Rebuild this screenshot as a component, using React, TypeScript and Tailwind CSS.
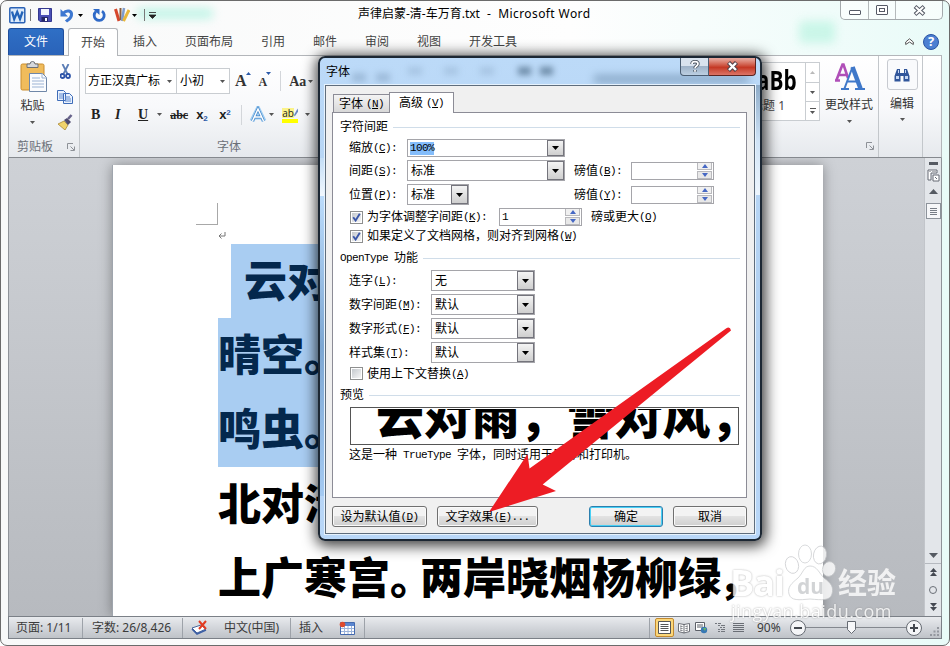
import type { ReactNode } from "react";
import clsx from "clsx";

const ribbonTabs = ["插入", "页面布局", "引用", "邮件", "审阅", "视图", "开发工具"];

// Latin runs are set half as wide as the Chinese glyphs
function Sim({ children }: { children: string }) {
  const parts = children.split(/([ -~]+)/).filter(Boolean);
  return (
    <span className="flex h-[12px] items-center text-[12px] leading-[12px] whitespace-pre">
      {parts.map((p, i) =>
        /^[ -~]/.test(p) ? (
          <span key={i} className="font-['Liberation_Mono','Noto_Sans_CJK_SC',monospace] text-[11px] tracking-[-0.6px]">{p}</span>
        ) : (
          <span key={i}>{p}</span>
        )
      )}
    </span>
  );
}

function Label({ text, k, colon }: { text: string; k: string; colon?: boolean }) {
  return (
    <span className="flex h-[12px] items-center text-[12px] leading-[12px] whitespace-pre">
      {text}
      <span className="font-['Liberation_Mono',monospace] text-[11px] tracking-[-0.6px]">
        (<span className="underline underline-offset-1">{k}</span>){colon ? ":" : ""}
      </span>
    </span>
  );
}

function Caret({ className = "", fill = "#555" }: { className?: string; fill?: string }) {
  return (
    <svg width="5" height="3" viewBox="0 0 5 3" className={clsx("shrink-0", className)}>
      <path d="M0 0h5L2.5 3z" fill={fill} />
    </svg>
  );
}

function Combo({ value, className, selected }: { value: string; className: string; selected?: boolean }) {
  return (
    <div className={clsx("flex border border-[#a5a5aa] bg-white", className)}>
      <div className="flex flex-1 items-center pl-[3px]">
        <span className={clsx("flex h-[13px] items-center", selected ? "-ml-px bg-[#84bdfb]" : "")}>
          <Sim>{value}</Sim>
        </span>
      </div>
      <div className="flex w-[17px] items-center justify-center border border-[#74747c] bg-linear-to-b from-[#f4f4f4] to-[#cfcfcf]">
        <svg width="7" height="4" viewBox="0 0 7 4"><path d="M0 0h7L3.5 4z" fill="#000" /></svg>
      </div>
    </div>
  );
}

function Spinner({ value = "" }: { value?: string }) {
  return (
    <div className="flex h-[18px] w-[83px] border border-[#a5a5aa] bg-white">
      <div className="flex flex-1 items-center pl-[2px]"><Sim>{value}</Sim></div>
      <div className="mr-px flex w-[15px] flex-col gap-px">
        <div className="flex flex-1 items-center justify-center border border-t-0 border-[#b9b9bd] bg-[#f0f0f0]">
          <svg width="6" height="4" viewBox="0 0 6 4"><path d="M0 4h6L3 0z" fill="#4668c4" /></svg>
        </div>
        <div className="flex flex-1 items-center justify-center border border-[#b9b9bd] bg-[#e8e8e8]">
          <svg width="6" height="4" viewBox="0 0 6 4"><path d="M0 0h6L3 4z" fill="#4668c4" /></svg>
        </div>
      </div>
    </div>
  );
}

function Check({ on }: { on?: boolean }) {
  return (
    <div className="mr-[4px] ml-px size-[13px] border border-[#8e8f8f] bg-white p-px">
      <div className="size-full bg-linear-to-br from-[#c4c8cd] to-[#f6f6f6]">
        {on && (
          <svg width="9" height="9" viewBox="0 0 9 9"><path d="M1.2 4.2 3.6 7.5 7.8 .8" fill="none" stroke="#3a56a8" strokeWidth="1.9" /></svg>
        )}
      </div>
    </div>
  );
}

function GroupTitle({ children, className }: { children: string; className: string }) {
  return (
    <div className={clsx("flex items-center pr-[6px] pl-[7px]", className)}>
      <Sim>{children}</Sim>
      <div className="ml-[5px] h-px flex-1 bg-[#d0dde9]" />
    </div>
  );
}

function DialogButton({ children, className, primary }: { children: ReactNode; className: string; primary?: boolean }) {
  return (
    <div
      className={clsx(
        "flex h-[21px] items-center justify-center rounded-[3px] border bg-linear-to-b from-[#f3f3f3] from-50% via-[#e2e2e2] via-50% to-[#cfcfcf]",
        primary ? "border-[#2c7fae] shadow-[inset_0_0_0_1px_#48d0f5]" : "border-[#707070] shadow-[inset_0_0_0_1px_#fafafa]",
        className
      )}
    >
      {children}
    </div>
  );
}

function FontDialog() {
  const features = [
    { text: "连字", k: "L", value: "无" },
    { text: "数字间距", k: "M", value: "默认" },
    { text: "数字形式", k: "F", value: "默认" },
    { text: "样式集", k: "T", value: "默认" },
  ];
  return (
    <div className="absolute top-[55px] left-[317px] flex h-[485px] w-[444px] flex-col rounded-[7px] border-2 border-[#1c2733] bg-linear-to-b from-[#bcdaf8] from-0% via-[#b0cff0] via-60% to-[#b9d7f8] px-[5px] pb-[5px] text-black shadow-[1px_2px_14px_3px_rgba(0,0,0,0.75)]">
      <div className="absolute top-[100px] left-0 h-[38px] w-[5px] bg-linear-to-b from-[#c4def6] to-[#f2f8fe]" />
      <div className="absolute top-[138px] left-0 h-[300px] w-[5px] bg-linear-to-b from-[#bcdcfb] via-[#7da7d3] to-[#a4caf2]" />
      <div className="absolute top-[27px] right-0 h-[110px] w-[5px] bg-linear-to-b from-[#8dabc8] via-[#cfe3f6] to-[#eef6fd]" />
      <div className="absolute top-[9px] left-[32px] flex gap-[14px] blur-[3px]">
        <div className="mt-[6px] h-[9px] w-[14px] bg-[#8aa9c8] opacity-60" />
        <div className="-ml-[4px] mt-[6px] h-[9px] w-[14px] bg-[#8aa9c8] opacity-60" />
        <div className="ml-[4px] h-[8px] w-[14px] bg-[#93b1cf] opacity-50" />
        <div className="ml-[8px] h-[8px] w-[14px] bg-[#93b1cf] opacity-50" />
        <div className="ml-[8px] h-[8px] w-[14px] bg-[#93b1cf] opacity-50" />
        <div className="ml-[10px] h-[8px] w-[13px] bg-[#587591] opacity-80" />
        <div className="-ml-[5px] h-[8px] w-[13px] bg-[#587591] opacity-80" />
      </div>
      <div className="absolute top-[17px] left-[274px] h-[8px] w-[155px] bg-[#6787a7] opacity-60 blur-[4px]" />
      <div className="relative flex h-[27px] shrink-0 justify-between">
        <span className="pt-[5px] pl-px text-[12px]">字体</span>
        <div className="-mr-[1px] flex h-[18px]">
          <div className="flex w-[29px] items-center justify-center rounded-bl-[4px] border border-t-0 border-[#4a5d72] bg-linear-to-b from-[#d9e3ee] from-45% via-[#9fb3c8] via-50% to-[#bccfe2]">
            <svg width="10" height="13" viewBox="0 0 10 13">
              <path d="M2 4C2 .9 8 .9 8 4c0 2-3 2-3 4.3M5 10v1.8" fill="none" stroke="#48525e" strokeWidth="3.4" />
              <path d="M2 4C2 .9 8 .9 8 4c0 2-3 2-3 4.3M5 10v1.8" fill="none" stroke="#fff" strokeWidth="1.7" />
            </svg>
          </div>
          <div className="flex w-[47px] items-center justify-center rounded-br-[4px] border border-t-0 border-l-0 border-[#5c2420] bg-linear-to-b from-[#e5a59b] from-5% via-[#c43723] via-55% to-[#dc7466]">
            <svg width="13" height="11" viewBox="0 0 13 11">
              <path d="m2.5 1.5 8 8m0-8-8 8" stroke="#54424a" strokeWidth="4.4" />
              <path d="m3 2 7 7m0-7-7 7" stroke="#fff" strokeWidth="2.4" />
            </svg>
          </div>
        </div>
      </div>

      <div className="relative flex flex-1 flex-col border border-[#5f6d7c] bg-[#f0f0f0] pt-[6px] shadow-[0_0_0_1px_#e6f2fd]">
        <div className="relative z-10 ml-[7px] flex h-[20px] items-end">
          <div className="flex h-[18px] w-[57px] items-center justify-center border border-b-0 border-[#8c8c96] bg-linear-to-b from-[#f4f4f4] to-[#d8d8d8]">
            <Label text="字体 " k="N" />
          </div>
          <div className="-mb-px -ml-px flex h-[21px] w-[65px] items-center justify-center border border-b-0 border-[#8c8c96] bg-white">
            <Label text="高级 " k="V" />
          </div>
        </div>
        <div className="ml-[6px] flex h-[386px] w-[415px] flex-col border border-[#8c8c96] bg-white pt-[2px]">
          <GroupTitle className="h-[24px]">字符间距</GroupTitle>
          <div className="flex h-[18px] items-center pl-[16px]">
            <div className="w-[58px]"><Label text="缩放" k="C" colon /></div>
            <Combo value="100%" selected className="h-[18px] w-[158px]" />
          </div>
          <div className="flex h-[27px] items-center pl-[16px]">
            <div className="w-[58px]"><Label text="间距" k="S" colon /></div>
            <Combo value="标准" className="h-[21px] w-[158px]" />
            <div className="ml-[9px] w-[57px]"><Label text="磅值" k="B" colon /></div>
            <Spinner />
          </div>
          <div className="flex h-[21px] items-center pl-[16px]">
            <div className="w-[58px]"><Label text="位置" k="P" colon /></div>
            <Combo value="标准" className="h-[21px] w-[62px]" />
            <div className="ml-[105px] w-[57px]"><Label text="磅值" k="Y" colon /></div>
            <Spinner />
          </div>
          <div className="mt-[3px] flex h-[18px] items-center pl-[16px]">
            <Check on />
            <div className="w-[132px]"><Label text="为字体调整字间距" k="K" colon /></div>
            <Spinner value="1" />
            <div className="ml-[9px]"><Label text="磅或更大" k="O" /></div>
          </div>
          <div className="flex h-[20px] items-center pl-[16px]">
            <Check on />
            <Label text="如果定义了文档网格，则对齐到网格" k="W" />
          </div>
          <GroupTitle className="h-[24px]">OpenType 功能</GroupTitle>
          <div className="flex flex-col gap-[3px]">
            {features.map((f) => (
              <div key={f.text} className="flex h-[21px] items-center pl-[16px]">
                <div className="w-[82px]"><Label text={f.text} k={f.k} colon /></div>
                <Combo value={f.value} className="h-[21px] w-[104px]" />
              </div>
            ))}
          </div>
          <div className="flex h-[21px] items-center pl-[16px]">
            <Check />
            <Label text="使用上下文替换" k="A" />
          </div>
          <GroupTitle className="h-[22px]">预览</GroupTitle>
          <div className="mt-px ml-[17px] h-[38px] w-[389px] border border-[#555] py-px">
            <div className="h-full overflow-hidden pl-[25px]">
              <div className="-mt-[17px] text-[48px] leading-[48px] font-black tracking-[-0.3px] whitespace-nowrap">云对雨，雪对风，</div>
            </div>
          </div>
          <div className="mt-px flex h-[17px] items-center pl-[16px]">
            <Sim>这是一种 TrueType 字体，同时适用于屏幕和打印机。</Sim>
          </div>
        </div>
        <div className="mt-[8px] ml-[6px] flex">
          <DialogButton className="w-[95px]"><Label text="设为默认值" k="D" /></DialogButton>
          <DialogButton className="ml-[10px] w-[101px]">
            <Label text="文字效果" k="E" /><Sim>...</Sim>
          </DialogButton>
          <DialogButton primary className="ml-[51px] w-[74px]"><Sim>确定</Sim></DialogButton>
          <DialogButton className="ml-[10px] w-[74px]"><Sim>取消</Sim></DialogButton>
        </div>
      </div>
    </div>
  );
}

function TitleBar() {
  return (
    <div className="relative flex h-[28px] shrink-0 items-center">
      <div className="absolute top-[7px] left-[136px] h-[11px] w-[76px] rounded bg-[#8ff0d6] opacity-50 blur-[5px]" />
      <div className="absolute top-[20px] left-[798px] h-[22px] w-[36px] rounded bg-[#9df0d4] opacity-45 blur-[5px]" />
      <div className="relative flex items-center pl-[8px]">
        <svg width="17" height="17" viewBox="0 0 17 17">
          <rect x=".8" y=".8" width="15" height="15" rx="1" fill="#dceafa" stroke="#2b62b5" strokeWidth="1.5" />
          <path d="M3 4.500 5.200 12 8.200 5l2.800 7 2.600-7.500" fill="none" stroke="#2363b8" strokeWidth="2.300" />
        </svg>
        <div className="ml-[4px] h-[12px] w-px bg-[#777]" />
        <svg width="14" height="14" viewBox="0 0 14 14" className="ml-[7px]">
          <path d="M.5.500h13v13H2L.5 12z" fill="#4a4fb5" stroke="#34388f" />
          <path d="M3 1h8v6H3z" fill="#f3f6fd" />
          <path d="M3.500 9h6.500v4.500H3.500z" fill="#242766" />
          <path d="M7 10h2v3H7z" fill="#fff" />
        </svg>
        <svg width="14" height="15" viewBox="0 0 14 15" className="ml-[8px]">
          <path d="M3 5.500C7 1 12 3 11.500 7S8 11.500 6 13.500" fill="none" stroke="#3d77d0" strokeWidth="3" />
          <path d="M.5 1v7.500H8z" fill="#3d77d0" />
        </svg>
        <Caret className="ml-[4px]" fill="#000" />
        <svg width="14" height="14" viewBox="0 0 14 14" className="ml-[9px]">
          <path d="M10 3.200A5 5 0 1 1 4 3.500" fill="none" stroke="#2f6ac8" strokeWidth="2.800" />
          <path d="M1 1h6.500v6z" fill="#2f6ac8" />
        </svg>
        <svg width="16" height="16" viewBox="0 0 16 16" className="ml-[8px]">
          <path d="m1.500 2 3.500 12" stroke="#d5472c" strokeWidth="3" />
          <path d="M6.500 1v12" stroke="#8a5e3c" strokeWidth="2" />
          <path d="M10 1 8 14" stroke="#7f9ccb" strokeWidth="2.500" />
          <path d="M15 3 9.500 14" stroke="#e9b73a" strokeWidth="3" />
        </svg>
        <Caret className="ml-[2px]" fill="#000" />
        <div className="ml-[7px] h-[12px] w-px bg-[#777]" />
        <svg width="7" height="7" viewBox="0 0 7 7" className="ml-[4px]"><path d="M0 .5h7M0 3h7L3.500 6.500z" fill="#222" stroke="#222" strokeWidth=".8" /></svg>
      </div>
      <span className="absolute top-[4px] left-[357px] text-[12px] leading-[18px] whitespace-pre text-black">
        声律启蒙-清-车万育.txt<span className="tracking-[0.4px]">  -  Microsoft Word</span>
      </span>
      <div className="absolute top-0 right-[6px] flex h-[19px] w-[103px] rounded-b-[5px] border border-t-0 border-[#a3a9ac] bg-white/60">
        <div className="flex w-[28px] items-center justify-center border-r border-[#b4b9bb]">
          <div className="mt-[5px] h-[5px] w-[12px] rounded-[1px] border border-[#555a66] bg-white" />
        </div>
        <div className="flex w-[27px] items-center justify-center border-r border-[#b4b9bb]">
          <div className="flex h-[10px] w-[12px] items-center justify-center rounded-[1px] border border-[#555a66] bg-white">
            <div className="h-[4px] w-[6px] border border-[#555a66]" />
          </div>
        </div>
        <div className="flex flex-1 items-center justify-center">
          <svg width="13" height="11" viewBox="0 0 13 11">
            <path d="m2 1.500 9 8m0-8-9 8" stroke="#555a66" strokeWidth="4" />
            <path d="m2.700 2 7.600 7m0-7-7.600 7" stroke="#fff" strokeWidth="2" />
          </svg>
        </div>
      </div>
    </div>
  );
}

function Launcher() {
  return (
    <svg width="8" height="8" viewBox="0 0 8 8">
      <path d="M.5 6V.5H6M3.500 3.500 7 7M7.500 3.500v4h-4" fill="none" stroke="#8d9197" />
    </svg>
  );
}

function Ribbon() {
  return (
    <div className="mx-[7px] flex h-[102px] shrink-0 border border-t-0 border-b-[#85898e] border-[#b3b6ba] bg-linear-to-b from-white via-[#f8f9fb] to-[#e6e9ed] text-[12px] text-[#333]">
      <div className="flex w-[71px] flex-col border-r border-[#c3c7cb]">
        <div className="flex h-[82px] pl-[11px]">
          <div className="flex w-[28px] flex-col items-center pt-[5px]">
            <svg width="28" height="32" viewBox="0 0 28 32">
              <rect x="1" y="3" width="23" height="26" rx="1.500" fill="#f0bc5c" stroke="#c98d2e" />
              <path d="M7 5V3h3a2.500 2.500 0 0 1 5 0h3v3.500H7z" fill="#d5d8dc" stroke="#6c7178" />
              <path d="M9.500 12.500h13l4 4v14h-17z" fill="#fbfcfe" stroke="#6f87a8" />
              <path d="M22 12.500V17h4.500M12 17h8m-8 3h12m-12 3h12m-12 3h12" fill="none" stroke="#9cb3d4" />
            </svg>
            <span className="-ml-[3px] pt-[4px] leading-[18px]">粘贴</span>
            <Caret className="mt-[6px] -ml-[4px]" />
          </div>
          <div className="ml-[9px] flex flex-col items-center pt-[8px]">
            <svg width="11" height="16" viewBox="0 0 11 16">
              <path d="M2.500 0 7.500 10M8.500 0l-5 10" stroke="#5b7db5" strokeWidth="1.800" />
              <circle cx="2.500" cy="12" r="2" fill="none" stroke="#2d54a8" strokeWidth="1.800" />
              <circle cx="8" cy="12" r="2" fill="none" stroke="#2d54a8" strokeWidth="1.800" />
            </svg>
            <svg width="16" height="14" viewBox="0 0 16 14" className="mt-[10px]">
              <path d="M.5.500h6l2 2v8h-8zM6.500 3.500h6l3 3v7h-9z" fill="#e9f1fd" stroke="#3e6cb8" />
              <path d="M2 4h4M2 6h4M2 8h4M8 7h5M8 9h6M8 11h6" stroke="#5f8ad0" />
            </svg>
            <svg width="16" height="16" viewBox="0 0 16 16" className="mt-[10px]">
              <path d="m1 10 6-3 4 4-3 5z" fill="#f1d36c" stroke="#a98836" strokeWidth=".8" />
              <path d="m7 6 4 5 3-3-4-4z" fill="#4e4a6e" />
              <path d="m11 5 3.500-4" stroke="#66628a" strokeWidth="2.500" />
            </svg>
          </div>
        </div>
        <div className="flex items-center justify-between pr-[4px] pl-[8px] text-[#6b7078]">
          剪贴板<Launcher />
        </div>
      </div>

      <div className="flex w-[300px] flex-col pl-[5px]">
        <div className="mt-[12px] flex h-[26px] items-center text-black">
          <div className="flex h-[26px] w-[92px] items-center justify-between border border-[#c9cdd1] bg-white px-[2px] whitespace-nowrap">方正汉真广标<Caret className="mr-[2px]" /></div>
          <div className="-ml-px flex h-[26px] w-[54px] items-center justify-between border border-[#c9cdd1] bg-white pr-[4px] pl-[3px]">小初<Caret /></div>
          <div className="ml-[5px] flex font-['Liberation_Serif',serif] font-bold text-[#333]">
            <span className="text-[16px]">A</span>
            <svg width="5" height="3" viewBox="0 0 5 3" className="mt-[3px] -ml-[1px]"><path d="M0 3h5L2.500 0z" fill="#2b5aa8" /></svg>
            <span className="ml-[8px] pt-[4px] text-[12px]">A</span>
            <svg width="5" height="3" viewBox="0 0 5 3" className="mt-[3px] -ml-px"><path d="M0 0h5L2.500 3z" fill="#2b5aa8" /></svg>
          </div>
          <div className="ml-[9px] h-[20px] w-px bg-[#d3d6da]" />
          <span className="ml-[8px] font-['Liberation_Serif',serif] text-[14px] font-bold text-[#333]">Aa</span>
          <Caret className="ml-[2px]" />
        </div>
        <div className="mt-[9px] flex h-[23px] items-center pl-[6px] font-['Liberation_Serif',serif] text-[14px] text-[#222]">
          <span className="w-[24px] font-bold">B</span>
          <span className="w-[23px] font-bold italic">I</span>
          <span className="font-bold underline">U</span>
          <Caret className="ml-[9px]" />
          <span className="ml-[8px] w-[26px] text-[12px] font-bold line-through">abc</span>
          <span className="w-[23px] font-['Liberation_Sans',sans-serif] text-[13px] font-bold">x<sub className="text-[8px] text-[#2b5aa8]">2</sub></span>
          <span className="w-[22px] font-['Liberation_Sans',sans-serif] text-[13px] font-bold">x<sup className="text-[8px] text-[#2b5aa8]">2</sup></span>
          <div className="h-[20px] w-px bg-[#d3d6da]" />
          <svg width="18" height="18" viewBox="0 0 18 18" className="ml-[7px]">
            <path d="M3 15 9 3l6 12M5.500 11h7" fill="none" stroke="#9fcdf2" strokeWidth="5" />
            <path d="M3.500 15 9 3l5.500 12M5.500 11h7" fill="none" stroke="#3f83c7" strokeWidth="2.800" />
            <path d="M3.500 15 9 3l5.500 12M5.500 11h7" fill="none" stroke="#fff" strokeWidth="1.500" />
          </svg>
          <Caret className="ml-[2px]" />
          <div className="ml-[8px] flex w-[16px] flex-col">
            <div className="flex h-[12px] items-center font-['Open_Sans',sans-serif] text-[10px] leading-[10px]">
              <span className="bg-[#fbf38a]">ab</span>
              <svg width="6" height="11" viewBox="0 0 6 11"><path d="M5 0 0 9l1 2 5-7z" fill="#6887c4" /></svg>
            </div>
            <div className="h-[4px] bg-[#ffff00]" />
          </div>
          <Caret className="ml-[7px]" />
          <div className="mt-[12px] ml-[8px] h-[4px] w-[5px] shrink-0 bg-black" />
        </div>
        <div className="pt-[12px] pl-[132px] text-[#6b7078]">字体</div>
      </div>

      <div className="ml-auto flex w-[170px] border-r border-[#c3c7cb]">
        <div className="mt-[6px] flex h-[59px] w-[111px] justify-end border border-[#c9cdd1] bg-white">
          <div className="flex flex-1 flex-col items-end text-black">
            <span className="-mt-[2px] -mb-[2px] origin-right scale-x-80 pr-[10px] font-['Open_Sans',sans-serif] text-[26px] leading-[38px] font-bold">AaBb</span>
            <span className="pr-[20px] whitespace-nowrap text-[#444]">标题 1</span>
          </div>
          <div className="flex w-[14px] flex-col border-l border-[#c9cdd1]">
            <div className="flex h-[20px] items-center justify-center border-b border-[#c9cdd1]"><Caret className="rotate-180 opacity-40" /></div>
            <div className="flex h-[19px] items-center justify-center border-b border-[#c9cdd1]"><Caret /></div>
            <div className="flex flex-1 flex-col items-center justify-center gap-[2px]"><div className="h-px w-[6px] bg-[#555]" /><Caret /></div>
          </div>
        </div>
        <div className="flex flex-1 flex-col items-center pt-[6px]">
          <svg width="31" height="29" viewBox="0 0 31 29">
            <path d="M2.500 18 8.500 2.500h1L14 16M5 13h8M1 18.500h5" fill="none" stroke="#b04fb8" strokeWidth="2.600" />
            <path d="M10.500 26.500 18.500 5" fill="none" stroke="#3f78c9" strokeWidth="2" />
            <path d="m18.500 5 8 21.500" fill="none" stroke="#3f78c9" strokeWidth="4.500" />
            <path d="M13.500 19.500h11M7 27h8M21 27h10" stroke="#3f78c9" strokeWidth="2" />
          </svg>
          <span className="pt-[5px] leading-[18px] whitespace-nowrap">更改样式</span>
          <Caret className="mt-[6px]" />
          <div className="mt-auto mb-[7px] ml-auto pr-[4px]"><Launcher /></div>
        </div>
      </div>
      <div className="flex w-[44px] flex-col items-center border-r border-[#c3c7cb] pt-[3px]">
        <div className="ml-[3px] flex h-[31px] w-[31px] items-center justify-center rounded-[3px] border border-[#c7cad0] bg-[#f9fafc]">
          <svg width="16" height="14" viewBox="0 0 16 14">
            <path d="M3 1h3v4h4V1h3l2.500 7v5.500H9.500V8h-3v5.500H.500V8z" fill="#31569b" />
            <path d="M2 8h3v3H2zM11 8h3v3h-3zM4 2h1v3H4zM11 2h1v3h-1z" fill="#c6d8f4" />
          </svg>
        </div>
        <span className="pt-[5px] pl-[3px] leading-[18px]">编辑</span>
        <Caret className="mt-[5px] ml-[3px]" />
      </div>
      <div className="w-[18px]" />
    </div>
  );
}

function ScrollBar() {
  return (
    <div className="flex w-[17px] flex-col items-center border-l border-[#c2c5ca] bg-[#e3e6ea]">
      <div className="mt-[4px] h-[3px] w-[9px] bg-[#555a62]" />
      <svg width="13" height="13" viewBox="0 0 13 13" className="mt-[4px]">
        <path d="M1 1h9v3H4v7H1zM6 6h6v6H6z" fill="#fff" stroke="#666b74" />
        <path d="M3 2v1M6 2v1M8 2v1M8 8l2 2" stroke="#666b74" />
      </svg>
      <svg width="9" height="5" viewBox="0 0 9 5" className="mt-[7px]"><path d="M0 5h9L4.500 0z" fill="#555a62" /></svg>
      <div className="mt-[9px] flex h-[16px] w-[15px] flex-col items-center justify-center gap-px border border-[#8d939b] bg-[#f6f7f9]">
        {[0, 1, 2, 3].map((n) => <div key={n} className="h-px w-[7px] bg-[#777d86]" />)}
      </div>
      <div className="mt-auto flex flex-col items-center">
        <svg width="9" height="5" viewBox="0 0 9 5"><path d="M0 0h9L4.500 5z" fill="#555a62" /></svg>
        <div className="mt-[5px] h-px w-[16px] bg-[#b5b9bf]" />
        <svg width="7" height="9" viewBox="0 0 7 9" className="mt-[4px]"><path d="M0 4h7L3.500 0zM0 8h7L3.500 4z" fill="#444952" /></svg>
        <div className="mt-[9px] size-[8px] rounded-full border border-[#6b7078]" />
        <svg width="7" height="9" viewBox="0 0 7 9" className="mt-[9px] mb-[4px]"><path d="M0 0h7L3.500 4zM0 4h7L3.500 8z" fill="#444952" /></svg>
      </div>
    </div>
  );
}

function Document() {
  return (
    <div className="mx-[7px] flex h-[458px] shrink-0 overflow-hidden border-x border-[#8f9399] bg-linear-to-b from-[#ced1d6] to-[#b7babf]">
      <div className="flex-1" />
      <div className="relative mt-[7px] mr-[101px] w-[711px] shrink-0 border-l border-[#9fa5ad] bg-white pt-[79px] pl-[105px] text-[43px] leading-[74.3px] font-black text-black shadow-[0_0_12px_rgba(0,0,0,0.35)]">
        <div className="absolute top-[38px] left-[83px] h-[22px] w-[22px] border-r border-b border-[#a8a8a8]" />
        <svg width="8" height="7" viewBox="0 0 8 7" className="absolute top-[67px] left-[105px]">
          <path d="M7 0v4H1M3.500 1.500 1 4l2.500 2.500" fill="none" stroke="#777" />
        </svg>
        <div className="ml-[13px] w-[480px] bg-[#a9cdf2] pl-[13px] whitespace-nowrap text-[#04284d]">云对雨</div>
        <div className="h-[74px] w-[500px] bg-[#a9cdf2] whitespace-nowrap text-[#04284d]">晴空。</div>
        <div className="w-[500px] bg-[#a9cdf2] whitespace-nowrap text-[#04284d]">鸣虫。</div>
        <div className="whitespace-nowrap">北对清</div>
        <div className="flex whitespace-nowrap">
          <span>上广寒宫</span>
          <span className="-mr-[13px]">。</span>
          <span>两岸晓烟杨柳绿</span>
          <span className="-ml-[3px]">，</span>
        </div>
      </div>
      <ScrollBar />
    </div>
  );
}

function StatusBar() {
  const sep = <div className="h-[20px] w-px bg-[#9da2a9]" />;
  return (
    <div className="mx-[7px] flex h-[23px] shrink-0 items-center border border-[#7b8087] bg-linear-to-b from-[#e9ebee] via-[#d3d6db] to-[#bfc3c8] text-[12px] text-[#3b3b3b]">
      <span className="w-[73px] pl-[7px] whitespace-nowrap">页面: 1/11</span>{sep}
      <span className="w-[99px] pl-[9px] whitespace-nowrap">字数: 26/8,426</span>{sep}
      <svg width="17" height="15" viewBox="0 0 17 15" className="ml-[8px]">
        <path d="m1 8 5 5 9-4-5-4z" fill="#fff" stroke="#48679c" />
        <path d="m1 9 5 5 9-4" fill="none" stroke="#3d5fa5" strokeWidth="1.500" />
        <path d="m8 1 7 8m0-8L8 9" stroke="#e23c22" strokeWidth="2" />
      </svg>
      <span className="ml-[16px] w-[66px] whitespace-nowrap">中文(中国)</span>{sep}
      <span className="ml-[8px] w-[40px]">插入</span>
      <svg width="16" height="14" viewBox="0 0 16 14" className="mr-[9px]">
        <path d="M1.500 1.500h14v12h-14z" fill="#fff" stroke="#4369ae" />
        <path d="M2 2h13v3H2z" fill="#5a86d0" />
        <path d="M2 7.500h13M2 10.500h13M5.500 5v8M9 5v8M12.500 5v8" stroke="#9cb4dc" />
        <circle cx="3.500" cy="3.500" r="2.800" fill="#dd4a2e" />
      </svg>
      {sep}
      <div className="ml-auto flex items-center">
        {sep}
        <div className="ml-[5px] flex size-[19px] items-center justify-center rounded-[2px] border border-[#c28a30] bg-[#fcd77a]">
          <svg width="13" height="13" viewBox="0 0 13 13"><path d="M.5.500h12v12H.500z" fill="#fff" stroke="#555" /><path d="M2.500 3.500h8m-8 2h8m-8 2h8m-8 2h8" stroke="#555" /></svg>
        </div>
        <svg width="12" height="12" viewBox="0 0 12 12" className="ml-[4px]"><path d="M.5 1.500 6 2.500l5.500-1v8L6 11 .500 9.500zM6 2v9M2 4l2.500.500M2 6l2.500.500M2 8l2.500.500M7.500 4.500 10 4M7.500 6.500 10 6M7.500 8.500 10 8" fill="#fff" stroke="#5c6068" strokeWidth=".9" /></svg>
        <svg width="13" height="12" viewBox="0 0 13 12" className="ml-[5px]"><path d="M.5.500h9v8h-9z" fill="#fff" stroke="#5c6068" /><path d="M2 3h6M2 5h6" stroke="#5c6068" /><circle cx="9" cy="8" r="3.200" fill="#3878b4" /><path d="M8 6h3l-1 3z" fill="#6bbd62" /></svg>
        <svg width="11" height="11" viewBox="0 0 11 11" className="ml-[7px]"><path d="M0 1.500h6M3 3.500h7M5 5.500h5M3 7.500h7M3 9.500h7" stroke="#73777e" strokeDasharray="2 1 9 0" /></svg>
        <svg width="11" height="11" viewBox="0 0 11 11" className="ml-[7px]"><path d="M0 1.500h11M0 3.500h11M0 5.500h11M0 7.500h11M0 9.500h11" stroke="#6a6e75" /></svg>
        <span className="ml-[13px] w-[33px]">90%</span>
        <div className="flex size-[16px] items-center justify-center rounded-full border border-[#666b73] bg-[#f4f5f7]"><div className="h-[2px] w-[8px] bg-[#44484f]" /></div>
        <div className="flex h-[16px] w-[100px] items-center">
          <div className="h-px w-[41px] bg-[#84888f]" />
          <svg width="9" height="13" viewBox="0 0 9 13"><path d="M.5.500h8v8l-4 4-4-4z" fill="#f7f8fa" stroke="#666b73" /></svg>
          <div className="h-px flex-1 bg-[#84888f]" />
        </div>
        <div className="flex size-[16px] items-center justify-center rounded-full border border-[#666b73] bg-[#f4f5f7]">
          <svg width="8" height="8" viewBox="0 0 8 8"><path d="M0 4h8M4 0v8" stroke="#44484f" strokeWidth="2" /></svg>
        </div>
        <svg width="11" height="11" viewBox="0 0 11 11" className="mt-[8px] mr-px ml-[7px]"><path d="M8 1h2v2H8zM8 4.500h2v2H8zM4.500 4.500h2v2h-2zM8 8h2v2H8zM4.500 8h2v2h-2zM1 8h2v2H1z" fill="#94989f" /></svg>
      </div>
    </div>
  );
}

function Watermark() {
  return (
    <div className="absolute top-[542px] left-[729px] h-[84px] w-[170px] font-['Open_Sans','Noto_Sans_CJK_SC',sans-serif] text-white opacity-80">
      <svg width="170" height="84" viewBox="0 0 170 84" className="absolute inset-0">
        <g fill="#fff" stroke="#c3c5c8" strokeWidth=".8">
          <ellipse cx="62" cy="22" rx="6.500" ry="8.500" transform="rotate(-15 62 22)" />
          <ellipse cx="75" cy="11" rx="6.500" ry="9" />
          <ellipse cx="90" cy="12" rx="6.500" ry="9" transform="rotate(10 90 12)" />
          <ellipse cx="99" cy="26" rx="6.500" ry="7.500" transform="rotate(20 99 26)" />
          <path d="M80 23c7 0 9 7 14 12 7 5 10 9 8 16-2 7-10 6-22 5-11 1-19 2-21-5-2-7 3-11 9-16 5-5 6-12 12-12z" />
        </g>
      </svg>
      <span className="absolute top-[19px] left-0 text-[36px] leading-[42px] font-bold tracking-[-1px] [text-shadow:0_0_2px_#999]">Bai</span>
      <span className="absolute top-[32px] left-[67px] text-[21px] leading-[22px] font-bold text-[#c8cacd]">du</span>
      <span className="absolute top-[20px] left-[108px] text-[29px] leading-[40px] font-bold [text-shadow:0_0_1px_#bbb]">经验</span>
      <span className="absolute top-[57px] left-px text-[18px] leading-[22px] tracking-[0.45px] [text-shadow:0_0_2px_#888]">jingyan.baidu.com</span>
    </div>
  );
}

export default function App() {
  return (
    <div className="relative flex h-[646px] w-[950px] flex-col overflow-hidden rounded-[7px] border border-[#6b6b6b] bg-linear-to-r from-[#f8f9f9] via-[#fefefe] via-60% to-[#e9fbf8] font-['Noto_Sans','Noto_Sans_CJK_SC',sans-serif]">
      <TitleBar />
      <div className="mx-[7px] flex h-[27px] shrink-0 items-end border-b border-[#b3b6ba] text-[12px] text-[#444]">
        <div className="flex h-[27px] w-[56px] items-center justify-center rounded-t-[3px] border border-b-0 border-[#1f4e9d] bg-linear-to-b from-[#2f6fc5] to-[#2a63b9] text-white">文件</div>
        <div className="relative -mb-px ml-[4px] flex h-[28px] w-[50px] items-center justify-center rounded-t-[3px] border border-b-0 border-[#b3b6ba] bg-white">开始</div>
        <div className="ml-[15px] flex h-[27px] items-center gap-[28px]">
          {ribbonTabs.map((t) => <span key={t}>{t}</span>)}
        </div>
        <div className="ml-auto flex h-[27px] items-center gap-[9px] pr-[3px]">
          <svg width="9" height="8" viewBox="0 0 9 8"><path d="M.700 4 4.500.800 8.300 4v2.500L4.500 4 .700 6.500z" fill="#fff" stroke="#555" /></svg>
          <div className="flex size-[16px] items-center justify-center rounded-full border border-[#2a55a3] bg-[#4c80d2] text-[13px] font-bold text-white">?</div>
        </div>
      </div>
      <Ribbon />
      <Document />
      <StatusBar />
      <FontDialog />
      <svg width="950" height="646" viewBox="1 1 950 646" className="pointer-events-none absolute top-0 left-0">
        <path d="M489 512 527.500 454 529.500 468.500 726 328.500Q730 326 731 330.500L542.700 484.500 556 491z" fill="#ed1c24" />
      </svg>
      <Watermark />
    </div>
  );
}
